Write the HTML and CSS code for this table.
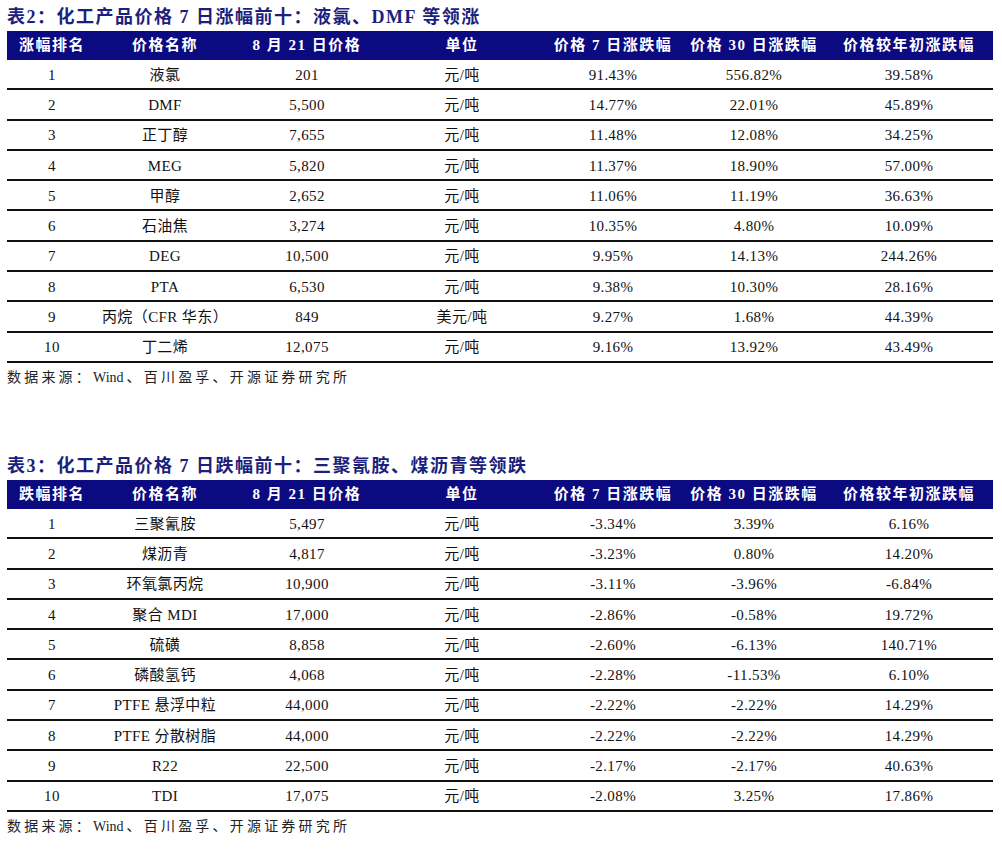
FILE: index.html
```html
<!DOCTYPE html>
<html lang="zh">
<head>
<meta charset="utf-8">
<title>化工产品价格涨跌幅</title>
<link rel="stylesheet" href="styles.css">
</head>
<body>
<section class="block first">
  <h2 class="title">表2：化工产品价格 7 日涨幅前十：液氯、DMF 等领涨</h2>
  <div class="grid">
    <div class="row head">
      <div>涨幅排名</div><div>价格名称</div><div>8 月 21 日价格</div><div>单位</div><div>价格 7 日涨跌幅</div><div>价格 30 日涨跌幅</div><div>价格较年初涨跌幅</div>
    </div>
    <div class="row"><div>1</div><div>液氯</div><div>201</div><div>元/吨</div><div>91.43%</div><div>556.82%</div><div>39.58%</div></div>
    <div class="row"><div>2</div><div>DMF</div><div>5,500</div><div>元/吨</div><div>14.77%</div><div>22.01%</div><div>45.89%</div></div>
    <div class="row"><div>3</div><div>正丁醇</div><div>7,655</div><div>元/吨</div><div>11.48%</div><div>12.08%</div><div>34.25%</div></div>
    <div class="row"><div>4</div><div>MEG</div><div>5,820</div><div>元/吨</div><div>11.37%</div><div>18.90%</div><div>57.00%</div></div>
    <div class="row"><div>5</div><div>甲醇</div><div>2,652</div><div>元/吨</div><div>11.06%</div><div>11.19%</div><div>36.63%</div></div>
    <div class="row"><div>6</div><div>石油焦</div><div>3,274</div><div>元/吨</div><div>10.35%</div><div>4.80%</div><div>10.09%</div></div>
    <div class="row"><div>7</div><div>DEG</div><div>10,500</div><div>元/吨</div><div>9.95%</div><div>14.13%</div><div>244.26%</div></div>
    <div class="row"><div>8</div><div>PTA</div><div>6,530</div><div>元/吨</div><div>9.38%</div><div>10.30%</div><div>28.16%</div></div>
    <div class="row"><div>9</div><div>丙烷（CFR 华东）</div><div>849</div><div>美元/吨</div><div>9.27%</div><div>1.68%</div><div>44.39%</div></div>
    <div class="row"><div>10</div><div>丁二烯</div><div>12,075</div><div>元/吨</div><div>9.16%</div><div>13.92%</div><div>43.49%</div></div>
  </div>
  <p class="source">数据来源：<span class="latin">Wind</span>、百川盈孚、开源证券研究所</p>
</section>

<section class="block second">
  <h2 class="title">表3：化工产品价格 7 日跌幅前十：三聚氰胺、煤沥青等领跌</h2>
  <div class="grid">
    <div class="row head">
      <div>跌幅排名</div><div>价格名称</div><div>8 月 21 日价格</div><div>单位</div><div>价格 7 日涨跌幅</div><div>价格 30 日涨跌幅</div><div>价格较年初涨跌幅</div>
    </div>
    <div class="row"><div>1</div><div>三聚氰胺</div><div>5,497</div><div>元/吨</div><div>-3.34%</div><div>3.39%</div><div>6.16%</div></div>
    <div class="row"><div>2</div><div>煤沥青</div><div>4,817</div><div>元/吨</div><div>-3.23%</div><div>0.80%</div><div>14.20%</div></div>
    <div class="row"><div>3</div><div>环氧氯丙烷</div><div>10,900</div><div>元/吨</div><div>-3.11%</div><div>-3.96%</div><div>-6.84%</div></div>
    <div class="row"><div>4</div><div>聚合 MDI</div><div>17,000</div><div>元/吨</div><div>-2.86%</div><div>-0.58%</div><div>19.72%</div></div>
    <div class="row"><div>5</div><div>硫磺</div><div>8,858</div><div>元/吨</div><div>-2.60%</div><div>-6.13%</div><div>140.71%</div></div>
    <div class="row"><div>6</div><div>磷酸氢钙</div><div>4,068</div><div>元/吨</div><div>-2.28%</div><div>-11.53%</div><div>6.10%</div></div>
    <div class="row"><div>7</div><div>PTFE 悬浮中粒</div><div>44,000</div><div>元/吨</div><div>-2.22%</div><div>-2.22%</div><div>14.29%</div></div>
    <div class="row"><div>8</div><div>PTFE 分散树脂</div><div>44,000</div><div>元/吨</div><div>-2.22%</div><div>-2.22%</div><div>14.29%</div></div>
    <div class="row"><div>9</div><div>R22</div><div>22,500</div><div>元/吨</div><div>-2.17%</div><div>-2.17%</div><div>40.63%</div></div>
    <div class="row"><div>10</div><div>TDI</div><div>17,075</div><div>元/吨</div><div>-2.08%</div><div>3.25%</div><div>17.86%</div></div>
  </div>
  <p class="source">数据来源：<span class="latin">Wind</span>、百川盈孚、开源证券研究所</p>
</section>
</body>
</html>
```

FILE: styles.css
```css
html, body {
  margin: 0;
  padding: 0;
  background: #ffffff;
}

body {
  width: 1002px;
  padding: 6px 9px 0 7px;
  box-sizing: border-box;
  font-family: "Liberation Serif", "Noto Sans CJK SC", serif;
  color: #111111;
}

.block.second {
  margin-top: 69px;
}

.title {
  margin: 0 0 3px 0;
  height: 22px;
  line-height: 22px;
  font-size: 18px;
  font-weight: bold;
  letter-spacing: 1.5px;
  color: #1c1f7c;
  white-space: nowrap;
}

.grid {
  width: 986px;
}

.row {
  display: grid;
  grid-template-columns: 90px 136px 148px 162px 140px 142px 168px;
  height: 30.3px;
  box-sizing: border-box;
  border-bottom: 2px solid #111111;
  font-size: 15px;
  line-height: 17px;
  letter-spacing: 0.4px;
}

.row > div {
  display: flex;
  align-items: center;
  justify-content: center;
  white-space: nowrap;
  line-height: 17px;
  padding-top: 2px;
}

.row.head {
  height: 29px;
  border-bottom: none;
  background: #0b0a80;
  color: #ffffff;
  font-weight: bold;
  letter-spacing: 1.5px;
}

.row.head > div {
  padding-top: 0;
}

.source {
  margin: 7px 0 0 0;
  height: 16px;
  line-height: 16px;
  font-size: 14px;
  letter-spacing: 3.2px;
  color: #222222;
  white-space: nowrap;
}

.source .latin {
  letter-spacing: 0;
  margin-right: 3px;
}
```
